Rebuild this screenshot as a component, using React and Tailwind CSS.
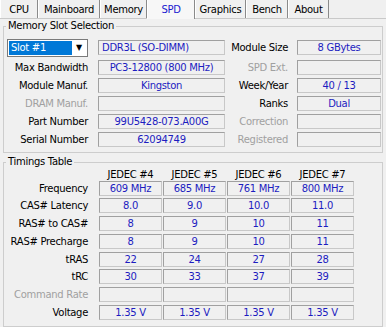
import React from "react";

const tabs = [
  ["CPU", "w-[38px]"],
  ["Mainboard", "w-[62px]"],
  ["Memory", "w-[47px]"],
  ["SPD", "w-[48px]"],
  ["Graphics", "w-[51px]"],
  ["Bench", "w-[42px]"],
  ["About", "w-[41px]"],
];

const slotRows = [
  ["Max Bandwidth", "PC3-12800 (800 MHz)", "SPD Ext.", ""],
  ["Module Manuf.", "Kingston", "Week/Year", "40 / 13"],
  ["DRAM Manuf.", "", "Ranks", "Dual"],
  ["Part Number", "99U5428-073.A00G", "Correction", ""],
  ["Serial Number", "62094749", "Registered", ""],
];

const disabled = ["DRAM Manuf.", "SPD Ext.", "Correction", "Registered", "Command Rate"];

const timings = [
  ["Frequency", ["609 MHz", "685 MHz", "761 MHz", "800 MHz"], "h-[17px]"],
  ["CAS# Latency", ["8.0", "9.0", "10.0", "11.0"], "h-[18px]"],
  ["RAS# to CAS#", ["8", "9", "10", "11"], "h-[18px]"],
  ["RAS# Precharge", ["8", "9", "10", "11"], "h-[18px]"],
  ["tRAS", ["22", "24", "27", "28"], "h-[17px]"],
  ["tRC", ["30", "33", "37", "39"], "h-[18px]"],
  ["Command Rate", ["", "", "", ""], "h-[18px]"],
  ["Voltage", ["1.35 V", "1.35 V", "1.35 V", "1.35 V"], "h-[18px]"],
];

function Label({ text, className }) {
  const off = disabled.includes(text);
  return (
    <div className={`${className} text-right leading-[15px] whitespace-nowrap ${off ? "text-[#a0a0a0]" : "text-black"}`}>
      {text}
    </div>
  );
}

function Field({ value, className, left }) {
  return (
    <div
      className={`${className} h-[15px] border border-[#a0a0a0] border-b-[#c8c8c8] border-r-[#c8c8c8] leading-[13px] text-[#1c1cc0] whitespace-nowrap overflow-hidden ${left ? "pl-[3px]" : "text-center"}`}
    >
      {value}
    </div>
  );
}

export default function App() {
  return (
    <div className="w-[386px] h-[327px] overflow-hidden bg-[#f0f0f0] font-['DejaVu_Sans',sans-serif] text-[10px] tracking-[-0.3px] select-none">
      {/* tabs */}
      <div className="flex items-end h-[19px] border-b border-[#c9c9c9]">
        {tabs.map(([name, w]) => {
          const active = name === "SPD";
          return (
            <div
              key={name}
              className={`${w} flex items-center justify-center border-l border-l-white border-r border-r-[#8a8a8a] ${
                active ? "h-[19px] -mb-px bg-[#f7f7f7] text-[#1a1ad0]" : "h-[18px] text-black"
              }`}
            >
              {name}
            </div>
          );
        })}
      </div>

      {/* memory slot selection */}
      <fieldset className="mx-[3px] mt-px border border-[#cdcdcd] pt-[7px] pb-[3px]">
        <legend className="ml-[2px] px-[2px] leading-[12px]">Memory Slot Selection</legend>

        <div className="flex h-[18px] items-start">
          <div className="w-[84px] pl-[3px]">
            <div className="flex h-[18px] w-[81px] border border-[#7a7a7a] bg-white p-px">
              <div className="flex-1 bg-[#0078d7] text-white leading-[14px] pl-[2px]">Slot #1</div>
              <div className="w-[14px] flex items-center justify-center text-black text-[8px]">▼</div>
            </div>
          </div>
          <div className="pt-px ml-[10px]">
            <Field value="DDR3L (SO-DIMM)" className="w-[127px]" left />
          </div>
          <div className="pt-px">
            <Label text="Module Size" className="w-[63px]" />
          </div>
          <div className="pt-px ml-[9px]">
            <Field value="8 GBytes" className="w-[84px]" />
          </div>
        </div>

        <div className="mt-[2px]">
          {slotRows.map(([l1, v1, l2, v2]) => (
            <div key={l1} className="flex h-[18px] items-start pt-px">
              <Label text={l1} className="w-[84px]" />
              <Field value={v1} className="ml-[10px] w-[127px]" />
              <Label text={l2} className="w-[63px]" />
              <Field value={v2} className="ml-[9px] w-[84px]" />
            </div>
          ))}
        </div>
      </fieldset>

      {/* timings table */}
      <fieldset className="mx-[3px] mt-[4px] border border-[#cdcdcd] pb-[4px]">
        <legend className="ml-[2px] px-[2px] leading-[10px]">Timings Table</legend>

        <div className="flex h-[12px] mt-[2px] leading-[12px]">
          <div className="w-[95px]" />
          {["JEDEC #4", "JEDEC #5", "JEDEC #6", "JEDEC #7"].map((h) => (
            <div key={h} className="w-[63px] mr-px text-center">
              {h}
            </div>
          ))}
        </div>

        <div className="-mt-px">
          {timings.map(([label, vals, h]) => (
            <div key={label} className={`flex items-start pt-px ${h}`}>
              <Label text={label} className="w-[84px]" />
              <div className="ml-[11px] flex gap-px">
                {vals.map((v, i) => (
                  <Field key={i} value={v} className="w-[63px]" />
                ))}
              </div>
            </div>
          ))}
        </div>
      </fieldset>
    </div>
  );
}
